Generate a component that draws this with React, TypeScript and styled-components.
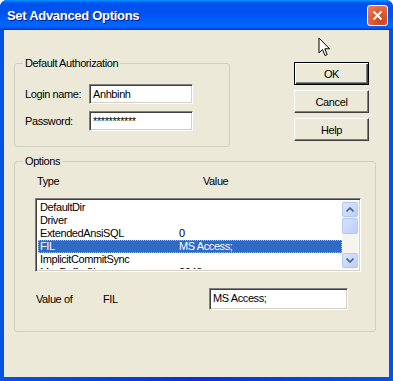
import styled, { createGlobalStyle } from "styled-components";

const GlobalStyle = createGlobalStyle`
  html, body {
    margin: 0;
    padding: 0;
    background: #ffffff;
  }
  body {
    width: 393px;
    height: 381px;
    overflow: hidden;
  }
`;

const Window = styled.div`
  position: relative;
  width: 393px;
  height: 381px;
  display: flex;
  flex-direction: column;
  border-radius: 7px 7px 0 0;
  overflow: hidden;
  background: #0831d9;
  font-family: "Liberation Sans", Arial, sans-serif;
  font-size: 11px;
  letter-spacing: -0.4px;
  color: #000;
`;

const TitleBar = styled.div`
  height: 30px;
  flex: none;
  display: flex;
  align-items: center;
  padding: 0 5px 0 7px;
  background: linear-gradient(
    to bottom,
    #0997ff 0%,
    #0053ee 10%,
    #0050ee 40%,
    #0066ff 85%,
    #005bff 93%,
    #003dd7 97%,
    #003dd7 100%
  );
`;

const Title = styled.span`
  flex: 1;
  color: #fff;
  font-weight: bold;
  font-size: 13px;
  letter-spacing: -0.3px;
  text-shadow: 1px 1px 0 #0a1883;
`;

const CloseButton = styled.div`
  width: 21px;
  height: 21px;
  box-sizing: border-box;
  border: 1px solid #fff;
  border-radius: 3px;
  display: flex;
  align-items: center;
  justify-content: center;
  background: radial-gradient(circle at 70% 80%, #cc4422 0%, #e05a30 45%, #e9825e 100%);
`;

const Frame = styled.div`
  flex: 1;
  display: flex;
  padding: 0 4px 4px;
  background: linear-gradient(to right, #0054e3, #0831d9 50%, #0054e3);
`;

const Client = styled.div`
  flex: 1;
  background: #ece9d8;
  padding: 27px 10px 0;
`;

const TopRow = styled.div`
  display: flex;
  align-items: flex-start;
`;

const GroupBox = styled.fieldset<{ $width: number }>`
  margin: 0;
  padding: 0;
  width: ${(p) => p.$width}px;
  box-sizing: border-box;
  min-width: 0;
  border: 1px solid #d0d0bf;
  border-radius: 3px;
`;

const Caption = styled.legend`
  margin-left: 8px;
  padding: 0 2px;
  line-height: 13px;
`;

const AuthBody = styled.div`
  display: flex;
  flex-direction: column;
  gap: 7px;
  padding: 14px 0 15px 10px;
`;

const FieldRow = styled.div`
  display: flex;
  align-items: center;
`;

const FieldLabel = styled.span`
  width: 64px;
`;

const TextBox = styled.div<{ $width: number; $height?: number }>`
  width: ${(p) => p.$width}px;
  height: ${(p) => p.$height ?? 20}px;
  box-sizing: border-box;
  background: #fff;
  border: 1px solid;
  border-color: #808080 #ffffff #ffffff #808080;
  box-shadow: inset 1px 1px 0 #404040, inset -1px -1px 0 #d4d0c8;
  padding: 2px 3px 0;
  line-height: 14px;
  white-space: nowrap;
  overflow: hidden;
`;

const ButtonColumn = styled.div`
  display: flex;
  flex-direction: column;
  gap: 5px;
  margin: 5px 0 0 64px;
`;

const Button = styled.div<{ $default?: boolean }>`
  width: 75px;
  height: 23px;
  box-sizing: border-box;
  display: flex;
  align-items: center;
  justify-content: center;
  background: #ece9d8;
  border: 1px solid;
  border-color: ${(p) => (p.$default ? "#000" : "#fff #404040 #404040 #fff")};
  box-shadow: ${(p) =>
    p.$default
      ? "inset 1px 1px 0 #fff, inset -1px -1px 0 #404040, inset -2px -2px 0 #808080"
      : "inset -1px -1px 0 #808080"};
`;

const OptionsGroup = styled(GroupBox)`
  margin-top: 8px;
`;

const OptionsBody = styled.div`
  padding: 7px 14px 21px 20px;
`;

const ListHeader = styled.div`
  display: grid;
  grid-template-columns: 166px 1fr;
  padding-left: 2px;
  line-height: 13px;
`;

const ListBox = styled.div`
  margin-top: 10px;
  height: 74px;
  box-sizing: border-box;
  display: flex;
  background: #fff;
  border: 1px solid;
  border-color: #808080 #ffffff #ffffff #808080;
  box-shadow: inset 1px 1px 0 #404040, inset -1px -1px 0 #d4d0c8;
  padding: 2px;
  overflow: hidden;
`;

const Rows = styled.div`
  flex: 1;
  overflow: hidden;
`;

const Row = styled.div<{ $selected?: boolean }>`
  height: 13px;
  line-height: 13px;
  display: grid;
  grid-template-columns: 139px 1fr;
  padding-left: 2px;
  white-space: nowrap;
  background: ${(p) => (p.$selected ? "#316ac5" : "transparent")};
  color: ${(p) => (p.$selected ? "#fff" : "#000")};
  outline: ${(p) => (p.$selected ? "1px dotted #9fb8e6" : "none")};
  outline-offset: -1px;
`;

const ScrollBar = styled.div`
  width: 16px;
  flex: none;
  display: flex;
  flex-direction: column;
  background: #f5f4ee;
`;

const ScrollButton = styled.div`
  height: 15px;
  margin: 1px 0;
  box-sizing: border-box;
  display: flex;
  align-items: center;
  justify-content: center;
  border: 1px solid #b4c8f6;
  border-radius: 2px;
  background: linear-gradient(to bottom right, #dce6fd, #bccefa);
`;

const Track = styled.div`
  flex: 1;
  display: flex;
  flex-direction: column;
`;

const Thumb = styled.div`
  height: 16px;
  box-sizing: border-box;
  border: 1px solid #b4c8f6;
  border-radius: 2px;
  background: linear-gradient(to bottom right, #d6e1fd, #bccefa);
`;

const ValueRow = styled.div`
  margin-top: 16px;
  display: grid;
  grid-template-columns: 67px 106px 139px;
  align-items: center;
  padding-left: 1px;
`;

const Cursor = styled.svg`
  position: absolute;
  left: 318px;
  top: 37px;
`;

const rows = [
  { name: "DefaultDir", value: "" },
  { name: "Driver", value: "" },
  { name: "ExtendedAnsiSQL", value: "0" },
  { name: "FIL", value: "MS Access;" },
  { name: "ImplicitCommitSync", value: "" },
  { name: "MaxBufferSize", value: "2048" },
];

const Chevron = ({ up }: { up?: boolean }) => (
  <svg width="8" height="5" viewBox="0 0 8 5">
    <path
      d={up ? "M0.5 4.5 L4 1 L7.5 4.5" : "M0.5 0.5 L4 4 L7.5 0.5"}
      fill="none"
      stroke="#4d6185"
      strokeWidth="1.6"
    />
  </svg>
);

const App = () => {
  const selected = "FIL";
  const current = rows.find((r) => r.name === selected);

  return (
    <>
      <GlobalStyle />
      <Window>
        <TitleBar>
          <Title>Set Advanced Options</Title>
          <CloseButton>
            <svg width="11" height="11" viewBox="0 0 11 11">
              <path d="M1.5 1.5 L9.5 9.5 M9.5 1.5 L1.5 9.5" stroke="#fff" strokeWidth="2" />
            </svg>
          </CloseButton>
        </TitleBar>
        <Frame>
          <Client>
            <TopRow>
              <GroupBox $width={216}>
                <Caption>Default Authorization</Caption>
                <AuthBody>
                  <FieldRow>
                    <FieldLabel>Login name:</FieldLabel>
                    <TextBox $width={104}>Anhbinh</TextBox>
                  </FieldRow>
                  <FieldRow>
                    <FieldLabel>Password:</FieldLabel>
                    <TextBox $width={104}>***********</TextBox>
                  </FieldRow>
                </AuthBody>
              </GroupBox>
              <ButtonColumn>
                <Button $default>OK</Button>
                <Button>Cancel</Button>
                <Button>Help</Button>
              </ButtonColumn>
            </TopRow>

            <OptionsGroup $width={362}>
              <Caption>Options</Caption>
              <OptionsBody>
                <ListHeader>
                  <span>Type</span>
                  <span>Value</span>
                </ListHeader>
                <ListBox>
                  <Rows>
                    {rows.map((r) => (
                      <Row key={r.name} $selected={r.name === selected}>
                        <span>{r.name}</span>
                        <span>{r.value}</span>
                      </Row>
                    ))}
                  </Rows>
                  <ScrollBar>
                    <ScrollButton>
                      <Chevron up />
                    </ScrollButton>
                    <Track>
                      <Thumb />
                    </Track>
                    <ScrollButton>
                      <Chevron />
                    </ScrollButton>
                  </ScrollBar>
                </ListBox>
                <ValueRow>
                  <span>Value of</span>
                  <span>{selected}</span>
                  <TextBox $width={139} $height={22}>
                    {current?.value}
                  </TextBox>
                </ValueRow>
              </OptionsBody>
            </OptionsGroup>
          </Client>
        </Frame>
        <Cursor width="13" height="21" viewBox="0 0 13 21">
          <path
            d="M1 1 L1 16 L4.5 12.5 L7 18.5 L9.2 17.6 L6.8 11.8 L11.5 11.8 Z"
            fill="#fff"
            stroke="#000"
            strokeWidth="1"
            strokeLinejoin="miter"
          />
        </Cursor>
      </Window>
    </>
  );
};

export default App;
